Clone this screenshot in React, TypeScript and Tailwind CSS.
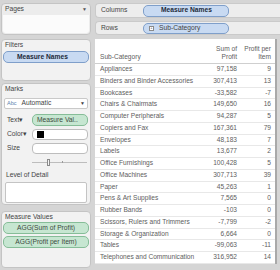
import React from "react";

interface Row {
  name: string;
  sum: string;
  per: string;
}

const rows: Row[] = [
  { name: "Appliances", sum: "97,158", per: "9" },
  { name: "Binders and Binder Accessories", sum: "307,413", per: "13" },
  { name: "Bookcases", sum: "-33,582", per: "-7" },
  { name: "Chairs & Chairmats", sum: "149,650", per: "16" },
  { name: "Computer Peripherals", sum: "94,287", per: "5" },
  { name: "Copiers and Fax", sum: "167,361", per: "79" },
  { name: "Envelopes", sum: "48,183", per: "7" },
  { name: "Labels", sum: "13,677", per: "2" },
  { name: "Office Furnishings", sum: "100,428", per: "5" },
  { name: "Office Machines", sum: "307,713", per: "39" },
  { name: "Paper", sum: "45,263", per: "1" },
  { name: "Pens & Art Supplies", sum: "7,565", per: "0" },
  { name: "Rubber Bands", sum: "-103", per: "0" },
  { name: "Scissors, Rulers and Trimmers", sum: "-7,799", per: "-2" },
  { name: "Storage & Organization", sum: "6,664", per: "0" },
  { name: "Tables", sum: "-99,063", per: "-11" },
  { name: "Telephones and Communication", sum: "316,952", per: "14" },
];

const font = { fontFamily: '"Liberation Sans", Arial, sans-serif' };

function BluePill({ children }: { children: React.ReactNode }) {
  return (
    <div className="h-[12px] rounded-[5px] border border-[#7f9fca] bg-[#c8daf2] flex items-center font-bold text-[#1d2a3a]">
      {children}
    </div>
  );
}

function GreenPill({ children, center }: { children: React.ReactNode; center?: boolean }) {
  return (
    <div
      className={`h-[12px] rounded-[5px] border border-[#86bd98] bg-[#c6e6d1] flex items-center text-[#3c4a40] ${
        center ? "justify-center" : "pl-[4px]"
      }`}
    >
      {children}
    </div>
  );
}

export default function App() {
  return (
    <div
      className="w-[280px] h-[270px] bg-[#d5d5d5] flex gap-[4px] pl-[1px] pt-[3px] text-[6.7px] text-[#444] leading-none overflow-hidden"
      style={font}
    >
      {/* left side: cards */}
      <div className="w-[90px] flex flex-col">
        {/* Pages */}
        <div className="h-[32px] rounded-[4px] border border-[#c4c4c4] bg-[#ececec] flex flex-col">
          <div className="h-[11px] flex items-center justify-between px-[3px]">
            <span>Pages</span>
            <span className="text-[5px] text-[#555]">▼</span>
          </div>
          <div className="flex-1 mx-[1px] mb-[1px] rounded-b-[3px] bg-[#fbfbfb]" />
        </div>

        {/* Filters */}
        <div className="mt-[4px] h-[42px] rounded-[4px] border border-[#c4c4c4] bg-[#f2f2f2] flex flex-col px-[1px]">
          <div className="h-[11px] flex items-center px-[2px]">Filters</div>
          <BluePill>
            <span className="pl-[13px]">Measure Names</span>
          </BluePill>
        </div>

        {/* Marks */}
        <div className="mt-[2px] h-[122px] rounded-[4px] border border-[#c4c4c4] bg-[#f2f2f2] flex flex-col px-[2px]">
          <div className="h-[10px] flex items-center px-[1px]">Marks</div>
          <div className="mt-[4px] h-[11px] rounded-[2px] border border-[#c9c9c9] bg-white flex items-center px-[2px]">
            <span className="text-[5.5px] text-[#5a7fae]">Abc</span>
            <span className="ml-[5px]">Automatic</span>
            <span className="ml-auto text-[5px]">▼</span>
          </div>
          <div className="mt-[5px] flex items-center">
            <span className="w-[28px] pl-[3px]">Text▾</span>
            <div className="flex-1">
              <GreenPill>Measure Val..</GreenPill>
            </div>
          </div>
          <div className="mt-[3px] flex items-center">
            <span className="w-[28px] pl-[3px]">Color▾</span>
            <div className="flex-1 h-[11px] rounded-[4px] border border-[#bdbdbd] bg-white flex items-center pl-[4px]">
              <div className="w-[7px] h-[7px] bg-black" />
            </div>
          </div>
          <div className="mt-[3px] flex items-center">
            <span className="w-[28px] pl-[3px]">Size</span>
            <div className="flex-1 h-[11px] rounded-[4px] border border-[#bdbdbd] bg-white" />
          </div>
          <div className="mt-[4px] ml-[28px] mr-[1px] h-[8px] relative flex items-center">
            <div className="w-full h-[1px] bg-[#bdbdbd]" />
            <div className="absolute left-[15px] top-[1px] w-[3px] h-[7px] border border-[#8a8a8a] bg-[#f4f4f4]" />
            <div className="absolute left-[30px] top-[3px] w-[1px] h-[2px] bg-[#9a9a9a]" />
          </div>
          <div className="mt-[6px] px-[2px]">Level of Detail</div>
          <div className="mt-[3px] mx-[1px] h-[21px] rounded-[2px] border border-[#c4c4c4] bg-white" />
        </div>

        {/* Measure Values */}
        <div className="mt-[6px] h-[57px] rounded-[4px] border border-[#c4c4c4] bg-[#f2f2f2] flex flex-col px-[1px]">
          <div className="h-[10px] flex items-center px-[2px]">Measure Values</div>
          <GreenPill center>AGG(Sum of Profit)</GreenPill>
          <div className="mt-[2px]">
            <GreenPill center>AGG(Profit per Item)</GreenPill>
          </div>
        </div>
      </div>

      {/* right side: shelves and view */}
      <div className="flex-1 flex flex-col">
        <div className="h-[15px] rounded-l-[4px] bg-[#ededed] border-y border-l border-[#cacaca] flex items-center">
          <span className="w-[47px] pl-[5px]">Columns</span>
          <div className="w-[86px]">
            <BluePill>
              <span className="pl-[17px]">Measure Names</span>
            </BluePill>
          </div>
        </div>
        <div className="mt-[3px] h-[14px] rounded-l-[4px] bg-[#ededed] border-y border-l border-[#cacaca] flex items-center">
          <span className="w-[47px] pl-[5px]">Rows</span>
          <div className="w-[86px] h-[11px] rounded-[5px] border border-[#7f9fca] bg-[#c8daf2] flex items-center pl-[5px]">
            <span className="w-[5px] h-[5px] border border-[#8a8a8a] bg-white text-[4px] flex items-center justify-center">+</span>
            <span className="ml-[5px]">Sub-Category</span>
          </div>
        </div>

        <div className="mt-[4px] w-[182px] h-[225px] bg-white border-r-[2px] border-[#a9a9a9] flex flex-col text-[#606060] text-[6.6px]">
          <div className="h-[25px] shrink-0 border-b border-[#cfcfcf] flex items-end pb-[2px] pl-[5px] pr-[4px]">
            <span className="flex-1">Sub-Category</span>
            <span className="w-[40px] text-right leading-[8px]">
              Sum of
              <br />
              Profit
            </span>
            <span className="w-[34px] text-right leading-[8px]">
              Profit per
              <br />
              Item
            </span>
          </div>
          {rows.map((r, i) => (
            <div
              key={i}
              className="h-[11.75px] shrink-0 border-b border-[#e8e8e8] flex items-center pl-[5px] pr-[4px]"
            >
              <span className="flex-1 whitespace-nowrap">{r.name}</span>
              <span className="w-[40px] text-right">{r.sum}</span>
              <span className="w-[34px] text-right">{r.per}</span>
            </div>
          ))}
        </div>
      </div>
    </div>
  );
}
